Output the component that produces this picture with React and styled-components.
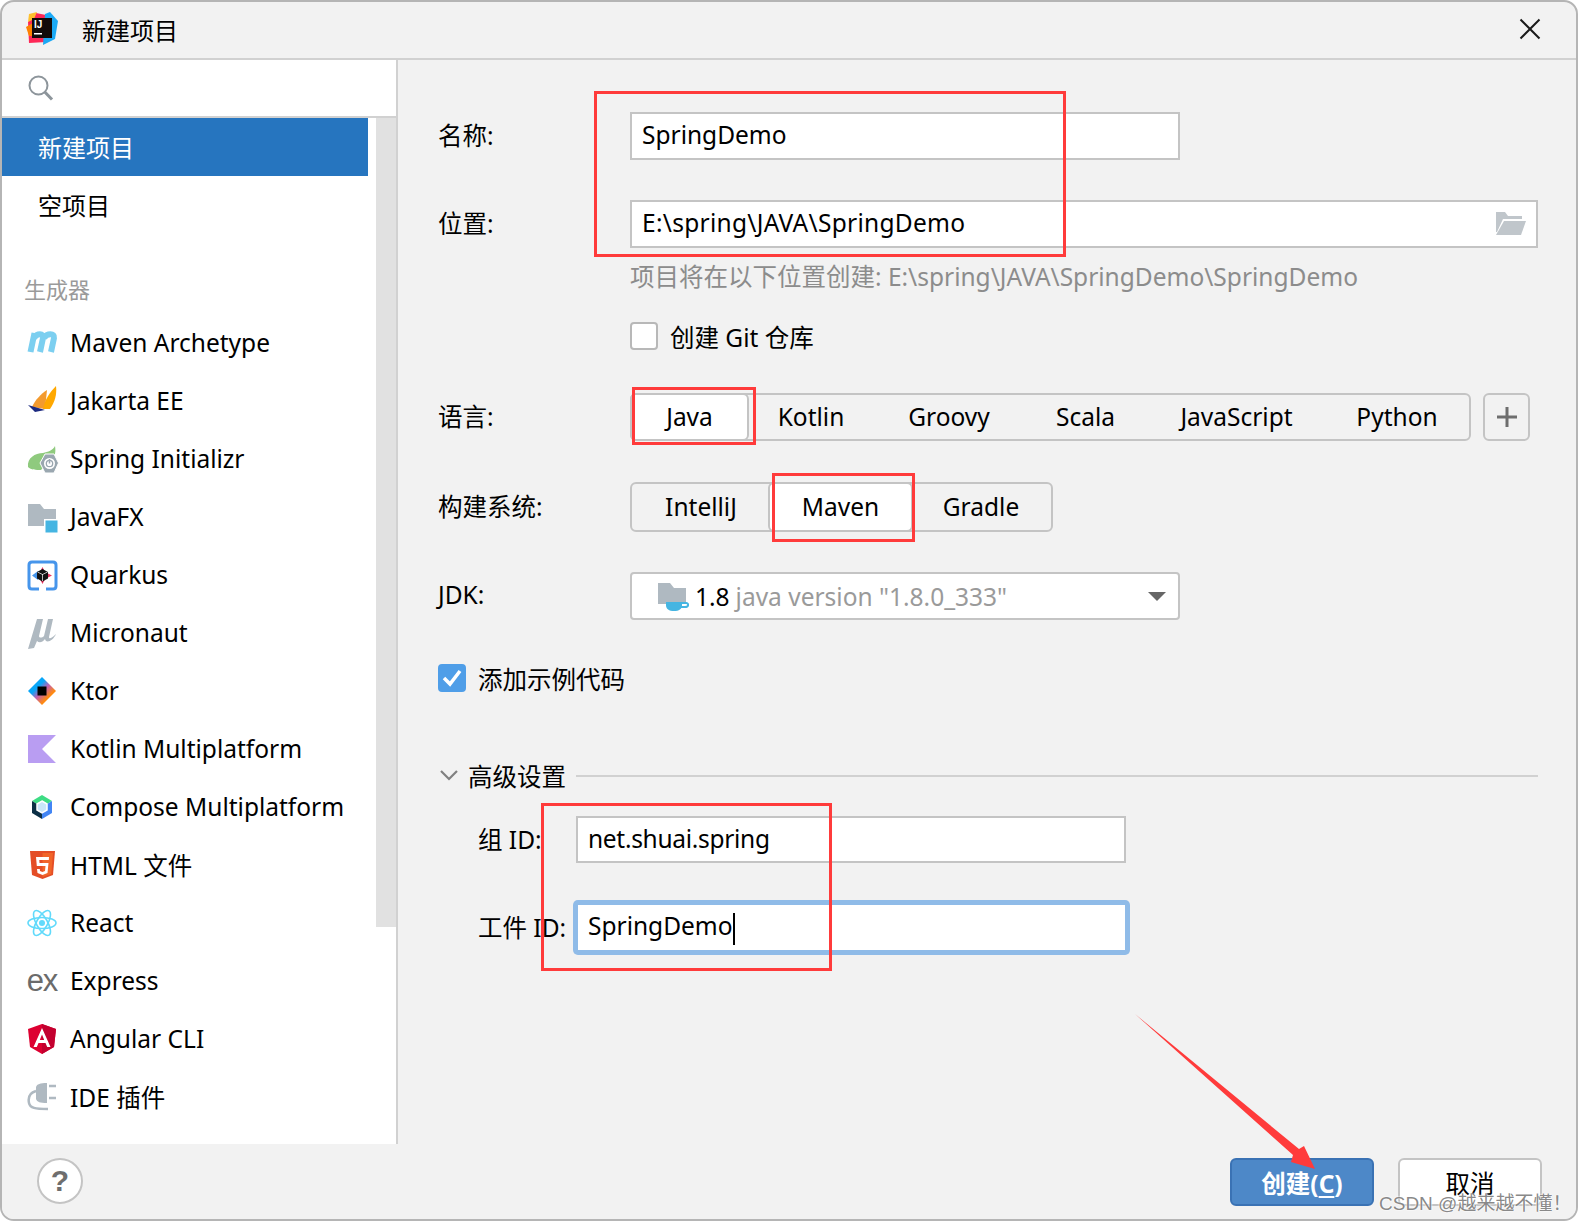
import styled, { createGlobalStyle } from "styled-components";

const GlobalStyle = createGlobalStyle`
  html, body { margin: 0; padding: 0; background: #fff; }
  body { font-family: "Noto Sans", "Noto Sans CJK SC", sans-serif; color: #000; }
  * { box-sizing: border-box; }
`;

const MavenIcon = () => (
  <svg width="32" height="32" viewBox="0 0 32 32" fill="none" stroke="#7ccff0" strokeWidth="6">
    <path d="M3.500 25 L7.500 6 M7 11 C10 6 17 6 16 11 L13 25 M17 11 C20 6 28 6 27 11 L24 25" />
  </svg>
);
const JakartaIcon = () => (
  <svg width="32" height="32" viewBox="0 0 32 32">
    <path d="M5 22 C8 15 14 9 20 5 L18 24 Z" fill="#f39a2e" />
    <path d="M16 24 C18 15 22 8 29 1 C30 9 28 17 23 24 Z" fill="#ffa800" />
    <path d="M1 20 L18 25 L8 27 Z" fill="#1c2a80" />
  </svg>
);
const SpringIcon = () => (
  <svg width="32" height="32" viewBox="0 0 32 32">
    <path d="M1 24 C0 15 8 10 16 10 C21 9 26 7 28 3 C29 9 28 13 25 15 L14 27 C9 27 4 27 1 24 Z" fill="#8fca7e" />
    <path d="M18 11 L27 11 L31.500 20 L27 30 L18 30 L13 20 Z" fill="#9aa7b0" stroke="#fff" strokeWidth="1" />
    <circle cx="22.500" cy="20.500" r="5.500" fill="#fff" />
    <circle cx="22.500" cy="20.500" r="3.200" fill="none" stroke="#9aa7b0" strokeWidth="1.300" />
    <path d="M22.500 16 V20.500" stroke="#9aa7b0" strokeWidth="1.500" />
  </svg>
);
const JavaFxIcon = () => (
  <svg width="32" height="32" viewBox="0 0 32 32">
    <path d="M1 3 H13 L17 8 H29 V25 H1 Z" fill="#afb9c1" />
    <rect x="17" y="18" width="14" height="14" fill="#fff" />
    <rect x="18.500" y="19.500" width="12" height="12" fill="#45b5e2" />
  </svg>
);
const QuarkusIcon = () => (
  <svg width="32" height="32" viewBox="0 0 32 32">
    <path d="M12 30 H5 Q2 30 2 27 V6 Q2 3 5 3 H26 Q29 3 29 6 V27 Q29 30 26 30 H19" fill="none" stroke="#4695eb" strokeWidth="3" />
    <path d="M15.500 8 L18 13 L25 16.500 L18 20 L15.500 25 L13 20 L6 16.500 L13 13 Z" fill="#e8335f" />
    <path d="M5 16.500 L11 12 V21 Z" fill="#4695eb" />
    <path d="M15.500 10 L21 13 V19.500 L15.500 22.500 L10 19.500 V13 Z" fill="#111" />
    <path d="M15.500 15 V22 M10.500 13 L15.500 15.500 L20.500 13" stroke="#fff" strokeWidth="0.700" fill="none" />
  </svg>
);
const MicronautIcon = () => (
  <svg width="32" height="32" viewBox="0 0 32 32">
    <path d="M10 2 H16 L12 19 C12 21 15 21 17 19 L21 2 H26 L22 20 C22 22 24 22 29 17 C26 24 19 27 18 22 C15 26 12 26 10 24 L7 31 L1 32 Z" fill="#afb9c1" />
  </svg>
);
const KtorIcon = () => (
  <svg width="32" height="32" viewBox="0 0 32 32">
    <defs>
      <linearGradient id="ktorFill" x1="0" y1="0" x2="1" y2="1">
        <stop offset="0.35" stopColor="#08a6f8" />
        <stop offset="0.52" stopColor="#c25fb0" />
        <stop offset="0.72" stopColor="#ff8a10" />
      </linearGradient>
    </defs>
    <path d="M15 2 L29 16 L15 30 L1 16 Z" fill="url(#ktorFill)" />
    <rect x="10.500" y="11.500" width="9" height="9" fill="#000" />
  </svg>
);
const KotlinIcon = () => (
  <svg width="32" height="32" viewBox="0 0 32 32">
    <path d="M1 2 H29 L15 16 L29 30 H1 Z" fill="#b99df2" />
  </svg>
);
const ComposeIcon = () => (
  <svg width="32" height="32" viewBox="0 0 32 32">
    <path d="M15 4 L25 10 L15 16 L5 10 Z" fill="#3ddc84" />
    <path d="M25 10 V22 L15 28 V16 Z" fill="#4285f4" />
    <path d="M5 10 V22 L15 28 V16 Z" fill="#0b2f45" />
    <path d="M15 10 L20 13 V19 L15 22 L10 19 V13 Z" fill="#c9e6fa" stroke="#fff" strokeWidth="1.500" />
  </svg>
);
const HtmlIcon = () => (
  <svg width="32" height="32" viewBox="0 0 32 32">
    <path d="M3 2 H28 L26 26 L15.500 30 L5 26 Z" fill="#e44d26" />
    <path d="M15.500 4 H26 L24.300 25 L15.500 28 Z" fill="#f16529" />
    <path d="M22 8 H9 L9.800 17 H18.500 L18 22 L15.500 23 L13 22 L12.800 20 H10 L10.500 24 L15.500 26 L20.500 24 L21.500 14 H12.500 L12.300 11 H21.800 Z" fill="#fff" />
  </svg>
);
const ReactIcon = () => (
  <svg width="32" height="32" viewBox="0 0 32 32" fill="none" stroke="#61dafb" strokeWidth="1.600">
    <ellipse cx="15" cy="16" rx="14" ry="5.500" />
    <ellipse cx="15" cy="16" rx="14" ry="5.500" transform="rotate(60 15 16)" />
    <ellipse cx="15" cy="16" rx="14" ry="5.500" transform="rotate(120 15 16)" />
    <circle cx="15" cy="16" r="3" fill="#61dafb" stroke="none" />
  </svg>
);
const AngularIcon = () => (
  <svg width="32" height="32" viewBox="0 0 32 32">
    <path d="M15 1 L1 6 L3 24 L15 31 L27 24 L29 6 Z" fill="#dd0031" />
    <path d="M15 1 V31 L27 24 L29 6 Z" fill="#c3002f" />
    <path d="M15 5 L6.500 24 H9.800 L11.500 20 H18.500 L20.200 24 H23.500 Z M12.800 17 L15 11.500 L17.200 17 Z" fill="#fff" fillRule="evenodd" />
  </svg>
);
const PluginIcon = () => (
  <svg width="32" height="32" viewBox="0 0 32 32">
    <path d="M9 10 C2 12 1 17 2 22 C3 27 8 28 21 28" fill="none" stroke="#afb9c1" strokeWidth="2.500" />
    <path d="M9 6 C10 3 13 2 20 2 V22 C13 22 10 21 9 18 Z" fill="#afb9c1" />
    <path d="M22 5 H29 M22 17 H29" stroke="#afb9c1" strokeWidth="2.500" />
  </svg>
);
const IdeaLogo = () => (
  <svg width="32" height="34" viewBox="0 0 32 34">
    <path d="M2 10 L10 1 L20 3 L20 30 L3 31 Z" fill="#fe2857" />
    <path d="M19 2 L24 0 L32 9 L29 27 L17 33 Z" fill="#1ba9f5" />
    <path d="M0 15 L7 11 L7 24 L3 24 Z" fill="#ff8100" />
    <path d="M3 2 L11 0 L8 7 L2 10 Z" fill="#ffc02e" />
    <rect x="6" y="6" width="20" height="20" fill="#120a0a" />
    <text x="8" y="15.500" fill="#fff" fontFamily="Liberation Sans" fontWeight="700" fontSize="10">IJ</text>
    <rect x="8" y="21" width="8" height="1.500" fill="#fff" />
  </svg>
);

const SearchIcon = () => (
  <svg width="26" height="26" viewBox="0 0 26 26" fill="none" stroke="#8d959b" strokeWidth="2">
    <circle cx="10.500" cy="10.500" r="9" />
    <path d="M16.800 17 L24 24.500" strokeWidth="3" />
  </svg>
);
const CloseIcon = () => (
  <svg width="22" height="22" viewBox="0 0 22 22" stroke="#1a1a1a" strokeWidth="2">
    <path d="M1.500 1.500 L20.500 20.500 M20.500 1.500 L1.500 20.500" />
  </svg>
);
const FolderOpenIcon = () => (
  <svg width="30" height="24" viewBox="0 0 30 24" fill="#c0c6cb">
    <path d="M0 0 H9 L12 4 H26 V7 H7 L1 20 H0 Z" />
    <path d="M8 9 H30 L25 23 H0 Z" />
  </svg>
);
const JdkIcon = () => (
  <svg width="31" height="29" viewBox="0 0 31 29">
    <path d="M0 1 H12 L16 6 H28 V22 H0 Z" fill="#afb9c1" />
    <path d="M8 20 H24 V23 C24 27 21 29 16 29 C11 29 8 27 8 23 Z" fill="#45b5e2" />
    <path d="M24 21 H28 C31 21 31 25 27 25 H23" fill="none" stroke="#45b5e2" strokeWidth="2" />
  </svg>
);
const CheckIcon = () => (
  <svg width="20" height="18" viewBox="0 0 20 18" fill="none" stroke="#fff" strokeWidth="3.500">
    <path d="M2 9 L8 15 L18 2" />
  </svg>
);
const ChevronIcon = () => (
  <svg width="18" height="11" viewBox="0 0 18 11" fill="none" stroke="#808080" strokeWidth="2.200">
    <path d="M1 1 L9 9 L17 1" />
  </svg>
);
const PlusIcon = () => (
  <svg width="20" height="20" viewBox="0 0 20 20" stroke="#6e6e6e" strokeWidth="3">
    <path d="M10 0 V20 M0 10 H20" />
  </svg>
);

const Window = styled.div`
  position: relative;
  width: 1578px;
  height: 1221px;
  display: flex;
  flex-direction: column;
  background: #f2f2f2;
  border: 2px solid #b5b5b5;
  border-radius: 14px;
  overflow: hidden;
  font-size: 24.5px;
`;

const TitleBar = styled.header`
  height: 58px;
  flex: none;
  display: flex;
  align-items: center;
  padding: 0 35px 2px 24px;
  border-bottom: 2px solid #d1d1d1;
`;

const Title = styled.h1`
  margin: 0 0 0 24px;
  flex: 1;
  font-size: 24px;
  font-weight: 400;
`;

const Main = styled.div`
  flex: 1;
  min-height: 0;
  display: flex;
`;

const Sidebar = styled.aside`
  width: 396px;
  flex: none;
  display: flex;
  flex-direction: column;
  background: #fff;
  border-right: 2px solid #d1d1d1;
`;

const SearchBox = styled.div`
  height: 58px;
  flex: none;
  display: flex;
  align-items: center;
  padding-left: 26px;
  border-bottom: 2px solid #d1d1d1;
`;

const SidebarBody = styled.div`
  flex: 1;
  display: flex;
  min-height: 0;
`;

const List = styled.div`
  width: 366px;
  flex: none;
`;

const Track = styled.div`
  width: 20px;
  height: 809px;
  margin-left: 8px;
  background: #e1e1e1;
`;

const TemplateRow = styled.div`
  height: 58px;
  display: flex;
  align-items: center;
  padding: 0 0 1px 36px;
  font-size: 24px;
  color: ${(p) => (p.$active ? "#fff" : "#000")};
  background: ${(p) => (p.$active ? "#2675bf" : "transparent")};
`;

const GroupHeading = styled.div`
  height: 80px;
  padding-top: 32px;
  padding-left: 22px;
  font-size: 22px;
  line-height: 46px;
  color: #9a9a9a;
`;

const GeneratorRow = styled.div`
  height: 58px;
  display: flex;
  align-items: center;
  gap: 11px;
  padding-left: 25px;
`;

const GeneratorName = styled.span`
  margin-top: -1px;
`;

const IconSlot = styled.span`
  width: 32px;
  height: 32px;
  flex: none;
  display: flex;
  align-items: center;
  justify-content: center;
`;

const ExLogo = styled.span`
  font-family: "Liberation Sans", sans-serif;
  font-size: 31px;
  letter-spacing: -1px;
  color: #6b6b6b;
  margin-left: -2px;
`;

const Form = styled.section`
  flex: 1;
  padding: 52px 38px 0 40px;
`;

const Row = styled.div`
  display: flex;
  align-items: center;
  margin-top: ${(p) => p.$top || 0}px;
  height: ${(p) => p.$height}px;
`;

const IndentRow = styled(Row)`
  padding-left: 40px;
`;

const Label = styled.label`
  width: ${(p) => p.$width || 192}px;
  flex: none;
  padding-bottom: 3px;
  white-space: nowrap;
`;

const TextField = styled.div`
  width: ${(p) => p.$width}px;
  height: 100%;
  display: flex;
  align-items: center;
  justify-content: space-between;
  padding: 0 10px ${(p) => (p.$focused ? 1 : 3)}px;
  background: #fff;
  border: 2px solid ${(p) => (p.$focused ? "#8fbbe8" : "#c4c4c4")};
  box-shadow: ${(p) => (p.$focused ? "0 0 0 3px #8fbbe8" : "none")};
  border-radius: ${(p) => (p.$focused ? "2px" : "0")};
  letter-spacing: ${(p) => p.$spacing || 0}px;
  svg { margin-top: 3px; }
`;

const Caret = styled.span`
  display: inline-block;
  width: 2px;
  height: 32px;
  background: #000;
  vertical-align: middle;
`;

const Hint = styled.div`
  margin: 14px 0 0 192px;
  height: 30px;
  line-height: 30px;
  color: #8c8c8c;
  white-space: nowrap;
`;

const CheckRow = styled(Row)`
  padding-left: ${(p) => p.$indent || 0}px;
  gap: 12px;
`;

const CheckBox = styled.span`
  width: 28px;
  height: 28px;
  flex: none;
  display: flex;
  align-items: center;
  justify-content: center;
  border-radius: 4px;
  background: ${(p) => (p.$checked ? "#4f9ee8" : "#fff")};
  border: 2px solid ${(p) => (p.$checked ? "#4f9ee8" : "#b8b8b8")};
`;

const Segmented = styled.div`
  height: 100%;
  display: flex;
  border: 2px solid #c4c4c4;
  border-radius: 6px;
`;

const Segment = styled.div`
  width: ${(p) => p.$width}px;
  margin: ${(p) => (p.$selected ? "-2px" : "0")};
  padding-bottom: 2px;
  display: flex;
  align-items: center;
  justify-content: center;
  background: ${(p) => (p.$selected ? "#fff" : "transparent")};
  border: ${(p) => (p.$selected ? "2px solid #c4c4c4" : "none")};
  border-radius: 6px;
`;

const AddButton = styled.div`
  width: 47px;
  height: 100%;
  margin-left: 12px;
  display: flex;
  align-items: center;
  justify-content: center;
  border: 2px solid #c4c4c4;
  border-radius: 6px;
`;

const Select = styled.div`
  width: 550px;
  height: 100%;
  display: flex;
  align-items: center;
  padding: 0 12px 0 26px;
  gap: 6px;
  background: #fff;
  border: 2px solid #c4c4c4;
  border-radius: 4px;
`;

const Version = styled.span`
  flex: 1;
  color: #9a9a9a;
  white-space: nowrap;
`;

const Arrow = styled.span`
  width: 0;
  height: 0;
  border-left: 9px solid transparent;
  border-right: 9px solid transparent;
  border-top: 9px solid #666;
`;

const SectionHeader = styled(Row)`
  gap: 10px;
  padding-left: 2px;
`;

const Rule = styled.span`
  flex: 1;
  height: 2px;
  margin: 2px 0 0;
  background: #d1d1d1;
`;

const Footer = styled.footer`
  height: 75px;
  flex: none;
  display: flex;
  align-items: flex-start;
  padding: 14px 34px 0 35px;
  background: #f2f2f2;
`;

const HelpButton = styled.div`
  width: 46px;
  height: 46px;
  display: flex;
  align-items: center;
  justify-content: center;
  background: #fff;
  border: 2px solid #c4c4c4;
  border-radius: 50%;
  font-family: "Liberation Sans", sans-serif;
  font-size: 30px;
  font-weight: 700;
  color: #6e6e6e;
`;

const FooterSpacer = styled.div`
  flex: 1;
`;

const Button = styled.button`
  width: 144px;
  height: 48px;
  margin-left: ${(p) => p.$left || 0}px;
  padding: 0;
  font: inherit;
  font-weight: ${(p) => (p.$primary ? 700 : 400)};
  color: ${(p) => (p.$primary ? "#fff" : "#000")};
  background: ${(p) => (p.$primary ? "#4d88c8" : "#fff")};
  border: 2px solid ${(p) => (p.$primary ? "#3a72b4" : "#c4c4c4")};
  border-radius: 6px;
  u { text-underline-offset: 3px; }
`;

// red annotation boxes drawn over the screenshot
const Mark = styled.div`
  position: absolute;
  left: ${(p) => p.$x - 2}px;
  top: ${(p) => p.$y - 2}px;
  width: ${(p) => p.$w}px;
  height: ${(p) => p.$h}px;
  border: 3px solid #ff3b3b;
  pointer-events: none;
`;

const ArrowMark = styled.svg`
  position: absolute;
  left: 1128px;
  top: 1008px;
`;

const Watermark = styled.div`
  position: absolute;
  left: 1377px;
  top: 1189px;
  font-family: "Liberation Sans", "Noto Sans CJK SC", sans-serif;
  font-size: 19px;
  line-height: 26px;
  color: rgba(105, 105, 105, 0.8);
  text-shadow: 0 0 2px #fff, 0 0 2px #fff;
  white-space: nowrap;
`;

const generators = [
  ["Maven Archetype", <MavenIcon />],
  ["Jakarta EE", <JakartaIcon />],
  ["Spring Initializr", <SpringIcon />],
  ["JavaFX", <JavaFxIcon />],
  ["Quarkus", <QuarkusIcon />],
  ["Micronaut", <MicronautIcon />],
  ["Ktor", <KtorIcon />],
  ["Kotlin Multiplatform", <KotlinIcon />],
  ["Compose Multiplatform", <ComposeIcon />],
  ["HTML 文件", <HtmlIcon />],
  ["React", <ReactIcon />],
  ["Express", <ExLogo>ex</ExLogo>],
  ["Angular CLI", <AngularIcon />],
  ["IDE 插件", <PluginIcon />],
];

const languages = [
  ["Java", 119, true],
  ["Kotlin", 128],
  ["Groovy", 148],
  ["Scala", 125],
  ["JavaScript", 177],
  ["Python", 144],
];

const buildSystems = [
  ["IntelliJ", 138],
  ["Maven", 145, true],
  ["Gradle", 140],
];

const App = () => {
  return (
    <>
      <GlobalStyle />
      <Window>
        <TitleBar>
          <IdeaLogo />
          <Title>新建项目</Title>
          <CloseIcon />
        </TitleBar>

        <Main>
          <Sidebar>
            <SearchBox>
              <SearchIcon />
            </SearchBox>
            <SidebarBody>
              <List>
                <TemplateRow $active>新建项目</TemplateRow>
                <TemplateRow>空项目</TemplateRow>
                <GroupHeading>生成器</GroupHeading>
                {generators.map(([name, icon]) => (
                  <GeneratorRow key={name}>
                    <IconSlot>{icon}</IconSlot>
                    <GeneratorName>{name}</GeneratorName>
                  </GeneratorRow>
                ))}
              </List>
              <Track />
            </SidebarBody>
          </Sidebar>

          <Form>
            <Row $height={48}>
              <Label>名称:</Label>
              <TextField $width={550}>SpringDemo</TextField>
            </Row>
            <Row $top={40} $height={48}>
              <Label>位置:</Label>
              <TextField $width={908} $spacing={0.28}>
                E:\spring\JAVA\SpringDemo
                <FolderOpenIcon />
              </TextField>
            </Row>
            <Hint>项目将在以下位置创建: E:\spring\JAVA\SpringDemo\SpringDemo</Hint>
            <CheckRow $top={30} $height={28} $indent={192}>
              <CheckBox />
              创建 Git 仓库
            </CheckRow>

            <Row $top={43} $height={48}>
              <Label>语言:</Label>
              <Segmented>
                {languages.map(([name, width, selected]) => (
                  <Segment key={name} $width={width} $selected={selected}>
                    {name}
                  </Segment>
                ))}
              </Segmented>
              <AddButton>
                <PlusIcon />
              </AddButton>
            </Row>
            <Row $top={41} $height={50}>
              <Label>构建系统:</Label>
              <Segmented>
                {buildSystems.map(([name, width, selected]) => (
                  <Segment key={name} $width={width} $selected={selected}>
                    {name}
                  </Segment>
                ))}
              </Segmented>
            </Row>
            <Row $top={40} $height={48}>
              <Label>JDK:</Label>
              <Select>
                <JdkIcon />
                <span>1.8</span>
                <Version>java version "1.8.0_333"</Version>
                <Arrow />
              </Select>
            </Row>
            <CheckRow $top={44} $height={28}>
              <CheckBox $checked>
                <CheckIcon />
              </CheckBox>
              添加示例代码
            </CheckRow>

            <SectionHeader $top={63} $height={40}>
              <ChevronIcon />
              高级设置
              <Rule />
            </SectionHeader>
            <IndentRow $top={21} $height={47}>
              <Label $width={98}>组 ID:</Label>
              <TextField $width={550} $spacing={-0.3}>net.shuai.spring</TextField>
            </IndentRow>
            <IndentRow $top={40} $height={49}>
              <Label $width={98}>工件 ID:</Label>
              <TextField $width={551} $focused>
                <span>
                  SpringDemo
                  <Caret />
                </span>
              </TextField>
            </IndentRow>
          </Form>
        </Main>

        <Footer>
          <HelpButton>?</HelpButton>
          <FooterSpacer />
          <Button $primary>
            创建(<u>C</u>)
          </Button>
          <Button $left={24}>取消</Button>
        </Footer>

        <Mark $x={594} $y={91} $w={472} $h={166} />
        <Mark $x={632} $y={387} $w={124} $h={58} />
        <Mark $x={772} $y={473} $w={143} $h={69} />
        <Mark $x={541} $y={803} $w={291} $h={168} />
        <ArrowMark width="190" height="165" viewBox="0 0 190 165">
          <path d="M5 4 L169 139 L174 136 L185 159 L161 152 L163 145 Z" fill="#ff3b3b" />
        </ArrowMark>
        <Watermark>CSDN @越来越不懂！</Watermark>
      </Window>
    </>
  );
};

export default App;
